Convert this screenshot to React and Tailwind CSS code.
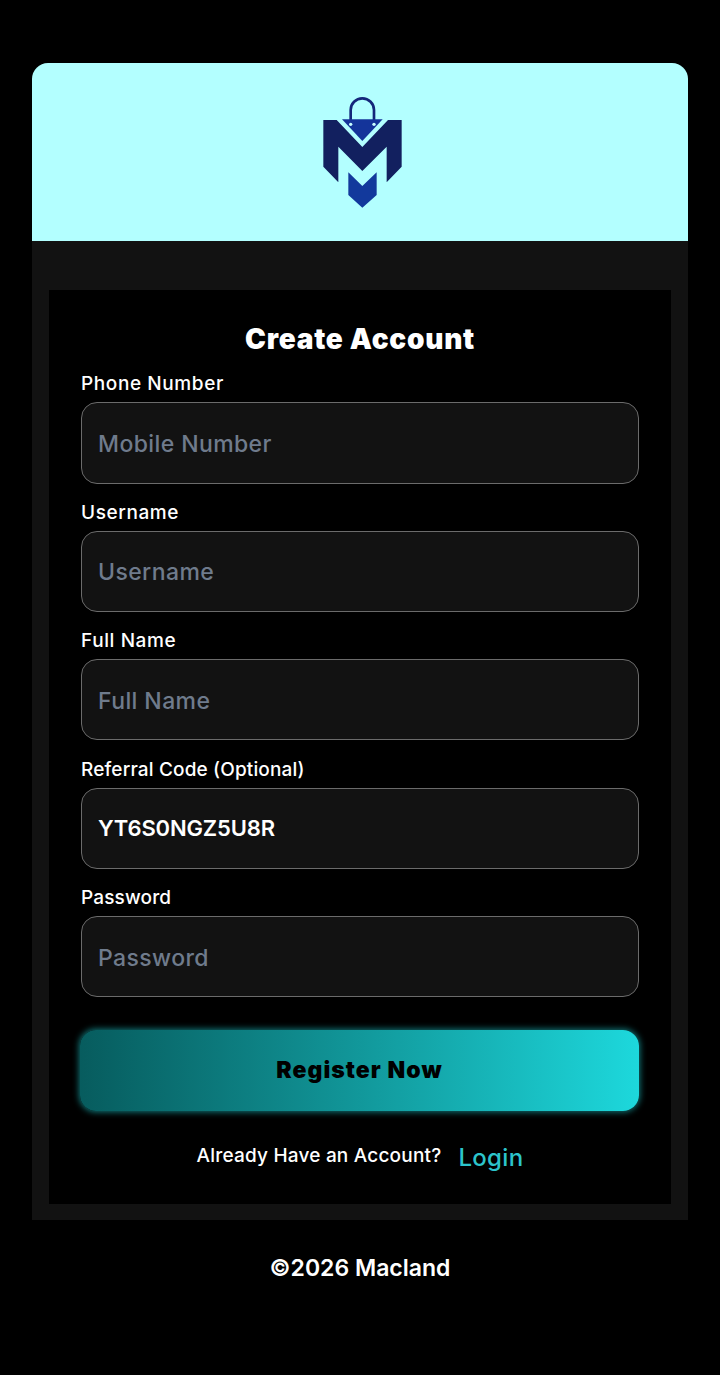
const font = { fontFamily: '"Inter", "Liberation Sans", sans-serif' };

function Logo() {
  return (
    <svg width="120" height="130" viewBox="0 0 360 390" className="block mb-[4px]">
      <path d="M152 108V75a35 35 0 0 1 70 0v33" fill="none" stroke="#14277a" strokeWidth="8" />
      <polygon points="70,105 110,105 187,186 264,105 305,105 305,245 260,292 260,185 187,258 115,185 115,292 70,245" fill="#12205f" />
      <polygon points="126,103 248,103 187,168" fill="#14349a" />
      <circle cx="152" cy="118" r="5" fill="#c8ffff" />
      <circle cx="222" cy="118" r="5" fill="#c8ffff" />
      <polygon points="145,262 187,303 230,262 230,330 187,368 145,330" fill="#12399c" />
    </svg>
  );
}

function Field({ label, placeholder, value, last, tight }) {
  return (
    <div className={last ? '' : 'mb-[19.15px]'}>
      <label className={`block h-[18px] pt-[1px] text-[19px] leading-[18px] font-medium text-white mb-[10px] ${tight ? 'tracking-[0.15px]' : 'tracking-[0.6px]'}`}>{label}</label>
      <input
        readOnly
        value={value || ''}
        placeholder={placeholder}
        style={font}
        className={`block w-full h-[81.3px] rounded-[16px] border border-[#6b6b6b] bg-[#121212] px-[16px] text-[22px] tracking-[-0.15px] text-white placeholder:text-[23px] placeholder:font-medium placeholder:tracking-[0.4px] placeholder:text-[#6f7b8c] outline-none ${value ? 'font-semibold' : 'pt-[2px] font-medium'}`}
      />
    </div>
  );
}

export default function App() {
  return (
    <div style={font} className="min-h-[1375px] bg-black px-[32px] pt-[63px] text-white">
      <div className="flex h-[178px] items-center justify-center rounded-t-[16px] bg-[#b3ffff]">
        <Logo />
      </div>
      <div className="bg-[#121212] px-[17px] pt-[49px] pb-[16px]">
        <div className="h-[914px] bg-black px-[32px] pt-[32px]">
          <h1 className="h-[34px] text-center text-[28px] leading-[34px] font-black text-white tracking-[0.75px] mb-[18.25px]">Create Account</h1>
          <Field label="Phone Number" placeholder="Mobile Number" />
          <Field label="Username" placeholder="Username" />
          <Field label="Full Name" placeholder="Full Name" />
          <Field label="Referral Code (Optional)" value="YT6S0NGZ5U8R" tight />
          <Field label="Password" placeholder="Password" last tight />
          <button
            style={font}
            className="mt-[32.5px] ml-[-1px] block w-[559px] h-[81px] rounded-[16px] bg-gradient-to-r from-[#075c5e] to-[#1dd8dc] text-[23px] font-black text-black tracking-[1.05px] shadow-[0_0_6px_1px_rgba(31,221,224,0.55)]"
          >
            Register Now
          </button>
          <div className="mt-[29px] flex items-center justify-center">
            <span className="pb-[4px] text-[19px] font-medium text-white tracking-[0.2px]">Already Have an Account?</span>
            <a className="ml-[17px] text-[24px] font-medium text-[#2cc4cb] tracking-[0.3px]">Login</a>
          </div>
        </div>
      </div>
      <div className="mt-[33px] text-center text-[23px] leading-[30px] font-semibold text-white">©2026 Macland</div>
    </div>
  );
}
